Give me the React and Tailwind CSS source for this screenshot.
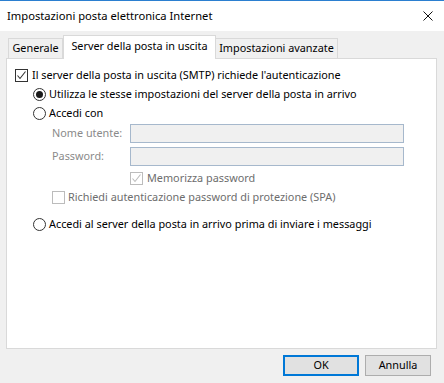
import React from 'react'

function Check({ checked, disabled }) {
  const c = disabled ? '#bcbcbc' : '#333333'
  return (
    <span
      className={`inline-flex h-[13px] w-[13px] shrink-0 items-center justify-center border bg-white ${
        disabled ? 'border-[#bcbcbc]' : 'border-[#333333]'
      }`}
    >
      {checked && (
        <svg width="11" height="11" viewBox="0 0 11 11">
          <path d="M1.5 5.5 L4 8.5 L9.5 1.5" fill="none" stroke={c} strokeWidth="1.1" />
        </svg>
      )}
    </span>
  )
}

function Radio({ checked }) {
  return (
    <span className="inline-flex h-[13px] w-[13px] shrink-0 items-center justify-center rounded-full border border-[#333333] bg-white">
      {checked && <span className="h-[7px] w-[7px] rounded-full bg-[#1a1a1a]" />}
    </span>
  )
}

export default function App() {
  return (
    <div
      className="flex h-[383px] w-[444px] flex-col overflow-hidden bg-[#f0f0f0] text-[10.85px] text-black"
      style={{ fontFamily: '"Noto Sans", "Liberation Sans", sans-serif' }}
    >
      {/* Title bar */}
      <div className="flex h-[31px] shrink-0 items-center justify-between border-t border-[#2b7fd0] bg-white pl-[7px] pr-[11px]">
        <span className="text-[11.2px]">Impostazioni posta elettronica Internet</span>
        <svg width="10" height="10" viewBox="0 0 10 10">
          <path d="M0.5 0.5 L9.5 9.5 M9.5 0.5 L0.5 9.5" stroke="#111" strokeWidth="1" />
        </svg>
      </div>

      <div className="flex flex-1 flex-col pl-[6px] pr-[7px]">
        {/* Tabs */}
        <div className="mt-[4px] flex h-[23px] items-end pl-[2px]">
          <div className="flex h-[20px] w-[55px] items-center justify-center border border-b-0 border-[#d9d9d9]">Generale</div>
          <div className="relative -mb-px flex h-[24px] w-[153px] items-center justify-center border border-b-0 border-[#d9d9d9] bg-white pb-[2px]">
            Server della posta in uscita
          </div>
          <div className="flex h-[20px] w-[122px] items-center justify-center border border-b-0 border-l-0 border-[#d9d9d9]">
            Impostazioni avanzate
          </div>
        </div>

        {/* Panel */}
        <div className="h-[291px] border border-[#d9d9d9] bg-white pl-[8px] pt-[7px]">
          <div className="flex h-[19px] items-center gap-[4px]">
            <Check checked />
            <span>Il server della posta in uscita (SMTP) richiede l'autenticazione</span>
          </div>
          <div className="ml-[18px] flex h-[19px] items-center gap-[3px]">
            <Radio checked />
            <span>Utilizza le stesse impostazioni del server della posta in arrivo</span>
          </div>
          <div className="ml-[18px] flex h-[19px] items-center gap-[3px]">
            <Radio />
            <span>Accedi con</span>
          </div>

          <div className="ml-[37px] mt-[1px] flex items-center">
            <span className="w-[78px] text-[#8a8a8a]">Nome utente:</span>
            <div className="h-[19px] w-[274px] border border-[#a6b8cc] bg-[#f0f0f0]" />
          </div>
          <div className="ml-[37px] mt-[4px] flex items-center">
            <span className="w-[78px] text-[#8a8a8a]">Password:</span>
            <div className="h-[19px] w-[274px] border border-[#a6b8cc] bg-[#f0f0f0]" />
          </div>

          <div className="ml-[115px] mt-[3px] flex h-[19px] items-center gap-[4px]">
            <Check checked disabled />
            <span className="text-[#6d6d6d]">Memorizza password</span>
          </div>
          <div className="ml-[37px] flex h-[19px] items-center gap-[3px]">
            <Check disabled />
            <span className="text-[#6d6d6d]">Richiedi autenticazione password di protezione (SPA)</span>
          </div>

          <div className="ml-[18px] mt-[8px] flex h-[19px] items-center gap-[3px]">
            <Radio />
            <span>Accedi al server della posta in arrivo prima di inviare i messaggi</span>
          </div>
        </div>

        {/* Buttons */}
        <div className="mt-[6px] flex justify-end gap-[6px] pr-[6px]">
          <button className="h-[21px] w-[76px] border-2 border-[#0078d7] bg-[#e1e1e1]">OK</button>
          <button className="h-[21px] w-[66px] border border-[#adadad] bg-[#e1e1e1]">Annulla</button>
        </div>
      </div>
    </div>
  )
}
